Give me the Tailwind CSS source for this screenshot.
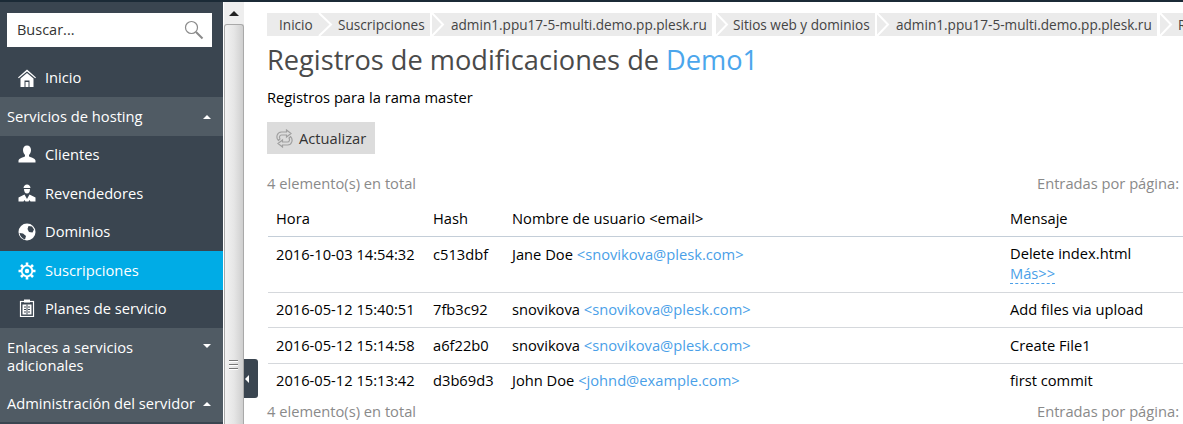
<!DOCTYPE html>
<html lang="es">
<head>
    <meta charset="UTF-8">
    <title>Registros de modificaciones</title>
    <script src="https://cdn.jsdelivr.net/npm/@tailwindcss/browser@4"></script>
</head>
<body class="bg-white overflow-hidden font-['Open_Sans',sans-serif]">
<div class="relative h-[424px] w-[1183px] overflow-hidden flex flex-col">
    <!-- Top strip -->
    <div class="h-[2px] shrink-0 bg-[#1b2a36]"></div>

    <div class="flex flex-1 min-h-0">
        <!-- Sidebar -->
        <aside class="w-[223px] shrink-0 bg-[#3a4550] text-white text-[14.7px] flex flex-col">
            <div class="mt-[11px] ml-[7px] w-[205px] h-[34px] bg-white flex items-center justify-between pl-[10px] pr-[8px] text-[#333] text-[14.5px]">
                <span>Buscar...</span>
                <svg width="20" height="20" viewBox="0 0 20 20" fill="none" stroke="#8a8a8a">
                    <circle cx="7.5" cy="7.5" r="6" stroke-width="1.2"/>
                    <path d="M12 12l6.500 6.500" stroke-width="2"/>
                </svg>
            </div>
            <nav class="mt-[11px]">
                <a class="h-[39px] flex items-center pl-[18px] gap-[9px]">
                    <svg width="18" height="18" viewBox="0 0 18 18" fill="#fff"><path d="M9 .5L0 8.500l.8.800L9 2.500l8.200 6.800.8-.800z"/><path d="M9 4L2.500 9.500V18h4v-6.500h5V18h4V9.500z"/><rect x="7.500" y="13" width="3" height="5"/></svg>
                    <span>Inicio</span>
                </a>
                <a class="h-[39px] flex items-center justify-between pl-[7px] pr-[12px] bg-[#505b64]">
                    <span>Servicios de hosting</span>
                    <span class="w-0 h-0 border-x-[4px] border-x-transparent border-b-[4px] border-b-white"></span>
                </a>
                <a class="h-[38px] flex items-center pl-[18px] pb-[2px] gap-[9px]">
                    <svg width="18" height="18" viewBox="0 0 18 18" fill="#fff"><path d="M9 .5c2.500 0 4 1.800 4 4.500 0 2.200-1 4-2 5v1.500c2 1 6 1.500 6.500 4v2H.5v-2c.5-2.500 4.500-3 6.500-4V10C6 9 5 7.200 5 5c0-2.700 1.500-4.500 4-4.500z"/></svg>
                    <span>Clientes</span>
                </a>
                <a class="h-[38px] flex items-center pl-[18px] gap-[9px]">
                    <svg width="18" height="18" viewBox="0 0 18 18" fill="#fff"><path d="M5.500 4C5.800 1.800 7 .5 9 .5S12.200 1.800 12.500 4z"/><path d="M6 5h6c0 2.500-1 4.500-3 4.500S6 7.500 6 5z"/><path d="M6.500 10.500L.5 13.500v4h5l1-1.500 1 1.500h3l1-1.500 1 1.500h5v-4l-6-3L9 15z"/></svg>
                    <span>Revendedores</span>
                </a>
                <a class="h-[39px] flex items-center pl-[18px] gap-[9px]">
                    <svg width="18" height="18" viewBox="0 0 18 18"><circle cx="9" cy="9" r="8.500" fill="#fff"/><path d="M10.500 3l3.500.5 2 3-1.500 3-3.500-.5-1.500-3zM1.500 10l3.500.5 3 2.500-1 3.500C4 15.500 2 13 1.500 10z" fill="#3a4550"/></svg>
                    <span>Dominios</span>
                </a>
                <a class="h-[39px] flex items-center pl-[18px] gap-[9px] bg-[#00ace6]">
                    <svg width="18" height="18" viewBox="0 0 18 18" fill="none" stroke="#fff"><circle cx="9" cy="9" r="5.300" stroke-width="1.800"/><circle cx="9" cy="9" r="2.200" fill="#fff" stroke="none"/><path d="M9 .5v3M9 14.500v3M.5 9h3M14.500 9h3M3 3l2.100 2.100M12.900 12.900L15 15M15 3l-2.100 2.100M5.100 12.900L3 15" stroke-width="2.600"/></svg>
                    <span>Suscripciones</span>
                </a>
                <a class="h-[38px] flex items-center pl-[18px] pb-[2px] gap-[9px]">
                    <svg width="18" height="18" viewBox="0 0 18 18" fill="none" stroke="#fff"><rect x="2.500" y="2.500" width="13" height="15" stroke-width="1.200"/><rect x="6" y=".5" width="6" height="3" fill="#fff" stroke="none"/><rect x="4.500" y="5.500" width="9" height="10" fill="#fff" stroke="none"/><path d="M9 5.500v10M6 8h2M10 8h2M6 10.500h2M10 10.500h2M6 13h2M10 13h2" stroke="#3a4550" stroke-width="1"/></svg>
                    <span>Planes de servicio</span>
                </a>
                <a class="h-[57px] flex justify-between pl-[7px] pr-[12px] pt-[10px] bg-[#505b64] leading-[18px]">
                    <span class="w-[170px]">Enlaces a servicios adicionales</span>
                    <span class="mt-[6px] w-0 h-0 border-x-[4px] border-x-transparent border-t-[4px] border-t-white"></span>
                </a>
                <a class="h-[37px] flex items-center justify-between pl-[7px] pr-[12px] bg-[#505b64]">
                    <span>Administración del servidor</span>
                    <span class="w-0 h-0 border-x-[4px] border-x-transparent border-b-[4px] border-b-white"></span>
                </a>
            </nav>
        </aside>

        <!-- Frame scrollbar -->
        <div class="w-[20px] shrink-0 ml-[1px] bg-[#eeeeee] flex flex-col">
            <div class="h-[22px] flex items-center justify-center">
                <span class="w-0 h-0 border-x-[5px] border-x-transparent border-b-[5px] border-b-[#222]"></span>
            </div>
            <div class="relative flex-1 rounded-t-[3px] border border-b-0 border-[#a9a9a9] bg-gradient-to-r from-[#f2f2f2] via-[#e6e6e6] to-[#cfcfcf]">
                <div class="absolute left-[4px] top-[335px] w-[9px] h-[10px] flex flex-col justify-between">
                    <i class="h-[2px] bg-[#777] border-b border-white"></i>
                    <i class="h-[2px] bg-[#777] border-b border-white"></i>
                    <i class="h-[2px] bg-[#777] border-b border-white"></i>
                </div>
            </div>
        </div>

        <!-- Content -->
        <main class="flex-1 min-w-0 pl-[23px] pr-[4px] overflow-hidden text-[14.7px] text-black">
            <ol class="mt-[11px] h-[23px] w-[960px] flex items-center text-[#444] text-[13.6px] whitespace-nowrap">
                <li class="h-full w-[65px] shrink-0 bg-[#ebebeb] flex items-center pl-[12px] pt-[1px] relative">Inicio
                    <svg class="absolute right-[-1px] top-0" width="15" height="23" fill="none" stroke="#fff" stroke-width="2"><path d="M1 0l12 11.500L1 23"/></svg>
                </li>
                <li class="h-full w-[98px] shrink-0 bg-[#ebebeb] flex items-center pl-[6px] pt-[1px]">Suscripciones</li>
                <li class="h-full w-[280px] shrink-0 ml-[2px] bg-[#ebebeb] flex items-center pl-[19px] pt-[1px] relative">
                    <svg class="absolute left-0 top-0" width="13" height="23" fill="none" stroke="#fff" stroke-width="2"><path d="M0 0l11 11.500L0 23"/></svg>
                    admin1.ppu17-5-multi.demo.pp.plesk.ru
                </li>
                <li class="h-full w-[159px] shrink-0 ml-[4px] bg-[#ebebeb] flex items-center pl-[17px] pt-[1px] relative">
                    <svg class="absolute left-0 top-0" width="13" height="23" fill="none" stroke="#fff" stroke-width="2"><path d="M0 0l11 11.500L0 23"/></svg>
                    Sitios web y dominios
                </li>
                <li class="h-full w-[280px] shrink-0 ml-[2px] bg-[#ebebeb] flex items-center pl-[19px] pt-[1px] relative">
                    <svg class="absolute left-0 top-0" width="13" height="23" fill="none" stroke="#fff" stroke-width="2"><path d="M0 0l11 11.500L0 23"/></svg>
                    admin1.ppu17-5-multi.demo.pp.plesk.ru
                </li>
                <li class="h-full w-[40px] shrink-0 ml-[3px] bg-[#ebebeb] flex items-center pl-[18px] pt-[1px] relative">
                    <svg class="absolute left-0 top-0" width="13" height="23" fill="none" stroke="#fff" stroke-width="2"><path d="M0 0l11 11.500L0 23"/></svg>
                    Repositorio
                </li>
            </ol>

            <h1 class="mt-[6px] text-[27.2px] leading-[36px] text-[#4a4a4a]">Registros de modificaciones de <a class="text-[#4ba6ec]">Demo1</a></h1>
            <p class="mt-[9px] leading-[20px]">Registros para la rama master</p>

            <button class="mt-[15px] h-[32px] w-[108px] bg-[#dcdcdc] flex items-center pl-[8px] gap-[5px] text-[#333]">
                <svg width="19" height="19" viewBox="0 0 19 19" fill="none" stroke="#a0a0a0" stroke-width="1.200"><path d="M11.500 1l4.500 3.500-4.500 3.500V6H6.500C4.500 6 4 8.500 5 10L3.500 11.500C.5 8.500 2 3 6.500 3h5z"/><path d="M7.500 18L3 14.500 7.500 11v2h5c2 0 2.500-2.500 1.500-4l1.500-1.500c3 3 1.500 8.500-3 8.500h-5z"/></svg>
                Actualizar
            </button>

            <div class="mt-[19px] flex justify-between leading-[20px] text-[#8a8a8a]">
                <span>4 elemento(s) en total</span>
                <span>Entradas por página:</span>
            </div>

            <table class="mt-[7px] ml-[1px] w-[915px] table-fixed border-collapse text-left">
                <colgroup>
                    <col class="w-[157px]"><col class="w-[79px]"><col class="w-[498px]"><col>
                </colgroup>
                <thead>
                    <tr class="h-[36px] border-b border-[#c4ced8]">
                        <th class="px-[8px] font-normal">Hora</th>
                        <th class="px-[8px] font-normal">Hash</th>
                        <th class="px-[8px] font-normal">Nombre de usuario &lt;email&gt;</th>
                        <th class="px-[8px] font-normal">Mensaje</th>
                    </tr>
                </thead>
                <tbody>
                    <tr class="h-[56px] border-b border-[#d5d8dc] align-top">
                        <td class="px-[8px] pt-[6px]">2016-10-03 14:54:32</td>
                        <td class="px-[8px] pt-[6px]">c513dbf</td>
                        <td class="px-[8px] pt-[6px]">Jane Doe <a class="text-[#4a9fe8]">&lt;snovikova@plesk.com&gt;</a></td>
                        <td class="px-[8px] pt-[6px] leading-[20px]">Delete index.html<br><a class="text-[#4a9fe8] border-b border-dashed border-[#4a9fe8]">Más&gt;&gt;</a></td>
                    </tr>
                    <tr class="h-[35px] border-b border-[#d5d8dc]">
                        <td class="px-[8px]">2016-05-12 15:40:51</td>
                        <td class="px-[8px]">7fb3c92</td>
                        <td class="px-[8px]">snovikova <a class="text-[#4a9fe8]">&lt;snovikova@plesk.com&gt;</a></td>
                        <td class="px-[8px]">Add files via upload</td>
                    </tr>
                    <tr class="h-[36px] border-b border-[#d5d8dc]">
                        <td class="px-[8px]">2016-05-12 15:14:58</td>
                        <td class="px-[8px]">a6f22b0</td>
                        <td class="px-[8px]">snovikova <a class="text-[#4a9fe8]">&lt;snovikova@plesk.com&gt;</a></td>
                        <td class="px-[8px]">Create File1</td>
                    </tr>
                    <tr class="h-[35px]">
                        <td class="px-[8px] pb-[2px]">2016-05-12 15:13:42</td>
                        <td class="px-[8px] pb-[2px]">d3b69d3</td>
                        <td class="px-[8px] pb-[2px]">John Doe <a class="text-[#4a9fe8]">&lt;johnd@example.com&gt;</a></td>
                        <td class="px-[8px] pb-[2px]">first commit</td>
                    </tr>
                </tbody>
            </table>

            <div class="mt-[3px] flex justify-between leading-[20px] text-[#8a8a8a]">
                <span>4 elemento(s) en total</span>
                <span>Entradas por página:</span>
            </div>
        </main>
    </div>

    <!-- Sidebar collapse handle -->
    <button class="absolute left-[244px] top-[359px] w-[14px] h-[39px] bg-[#3a4550] rounded-r-[3px] flex items-center pl-[1px]">
        <span class="w-0 h-0 border-y-[4px] border-y-transparent border-r-[4px] border-r-white"></span>
    </button>
</div>
</body>
</html>
